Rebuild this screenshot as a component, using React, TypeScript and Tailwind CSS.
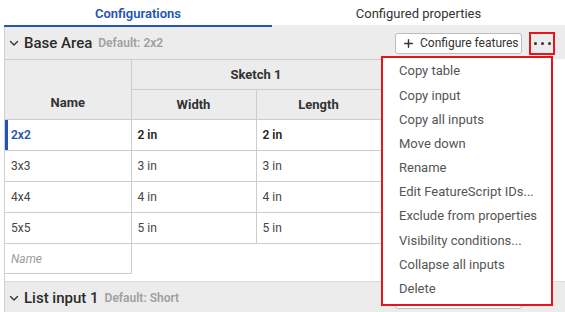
import { Plus } from "lucide-react";

const rows = [
    { name: "2x2", width: "2 in", length: "2 in", active: true },
    { name: "3x3", width: "3 in", length: "3 in" },
    { name: "4x4", width: "4 in", length: "4 in" },
    { name: "5x5", width: "5 in", length: "5 in" },
];

const menuItems = [
    "Copy table",
    "Copy input",
    "Copy all inputs",
    "Move down",
    "Rename",
    "Edit FeatureScript IDs...",
    "Exclude from properties",
    "Visibility conditions...",
    "Collapse all inputs",
    "Delete",
];

function Chevron() {
    return (
        <svg width="10" height="10" viewBox="0 0 10 10" className="mr-[5px] shrink-0">
            <path d="M1.5 3.5 L5 7 L8.5 3.5" fill="none" stroke="#333" strokeWidth="1.4" strokeLinecap="round" strokeLinejoin="round" />
        </svg>
    );
}

function InputHeader({ title, value, open }: { title: string; value: string; open?: boolean }) {
    return (
        <div className="flex h-[32px] items-center bg-[#ececec] pl-[4px] pr-[10px]">
            <Chevron />
            <span className="text-[15px] font-medium text-[#2b2b2b]">{title}</span>
            <span className="ml-[6px] text-[12px] font-semibold text-[#a0a0a0]">Default: {value}</span>
            <div className="ml-auto flex items-center gap-[7px]">
                <button className="flex h-[21px] w-[127px] items-center gap-[5px] rounded-[3px] border border-[#bdbdbd] bg-white pl-[6px] text-[12px] text-[#333]">
                    <Plus size={13} strokeWidth={2.6} />
                    Configure features
                </button>
                <div
                    className={
                        open
                            ? "flex h-[23px] w-[26px] items-center justify-center gap-[4px] border-2 border-[#e8141c]"
                            : "flex h-[23px] w-[26px] items-center justify-center gap-[4px]"
                    }
                >
                    <span className="h-[3px] w-[3px] rounded-full bg-[#333]" />
                    <span className="h-[3px] w-[3px] rounded-full bg-[#333]" />
                    <span className="h-[3px] w-[3px] rounded-full bg-[#333]" />
                </div>
            </div>
        </div>
    );
}

export default function App() {
    return (
        <div className="relative h-[312px] w-[565px] overflow-hidden bg-white font-['Roboto',sans-serif]">
            <div className="flex h-[27px] pl-[4px]">
                <div className="flex w-[268px] items-center justify-center border-b-2 border-[#2453b3] pt-[2px] text-[13px] font-semibold text-[#2453b3]">
                    Configurations
                </div>
                <div className="flex flex-1 items-center justify-center border-b-2 border-[#ececec] pt-[2px] text-[13px] text-[#333]">
                    Configured properties
                </div>
            </div>

            <div className="ml-[4px] border-l border-[#d0d0d0]">
                <InputHeader title="Base Area" value="2x2" open />

                <table className="border-collapse text-[12px] text-[#444]">
                    <thead>
                        <tr className="h-[30px] bg-[#ececec] text-[13px] font-bold text-[#333]">
                            <th rowSpan={2} className="w-[126px] border border-l-0 border-[#cdcdcd] pt-[26px]">
                                Name
                            </th>
                            <th colSpan={2} className="border border-[#cdcdcd]">
                                Sketch 1
                            </th>
                        </tr>
                        <tr className="h-[30px] bg-[#ececec] text-[13px] font-bold text-[#333]">
                            <th className="w-[125px] border border-[#cdcdcd]">Width</th>
                            <th className="w-[125px] border border-[#cdcdcd]">Length</th>
                        </tr>
                    </thead>
                    <tbody>
                        {rows.map((r) => (
                            <tr key={r.name} className="h-[31px]">
                                <td
                                    className={
                                        r.active
                                            ? "border border-l-0 border-[#cdcdcd] pl-[6px] font-semibold text-[#2453b3] shadow-[inset_3px_0_0_#2453b3]"
                                            : "border border-l-0 border-[#cdcdcd] pl-[6px]"
                                    }
                                >
                                    {r.name}
                                </td>
                                <td className={r.active ? "border border-[#cdcdcd] pl-[6px] font-semibold text-[#222]" : "border border-[#cdcdcd] pl-[6px]"}>
                                    {r.width}
                                </td>
                                <td className={r.active ? "border border-[#cdcdcd] pl-[6px] font-semibold text-[#222]" : "border border-[#cdcdcd] pl-[6px]"}>
                                    {r.length}
                                </td>
                            </tr>
                        ))}
                        <tr className="h-[30px]">
                            <td className="border border-l-0 border-[#cdcdcd] pl-[6px] italic text-[#9c9c9c]">Name</td>
                            <td />
                            <td />
                        </tr>
                    </tbody>
                </table>

                <div className="mt-[7px] border-t border-[#dadada]">
                    <InputHeader title="List input 1" value="Short" />
                </div>
            </div>

            <div className="absolute left-[381px] top-[56px] h-[250px] w-[172px] border-2 border-[#e8141c] bg-white pt-[1px]">
                {menuItems.map((item) => (
                    <div key={item} className="flex h-[24.2px] items-center pl-[16px] text-[13px] text-[#555]">
                        {item}
                    </div>
                ))}
            </div>
        </div>
    );
}
